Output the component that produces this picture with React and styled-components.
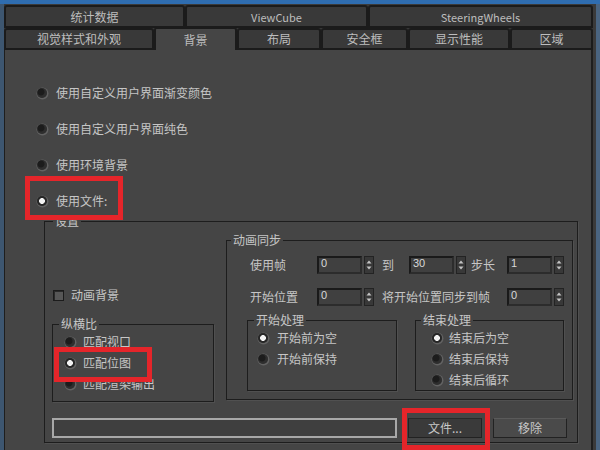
import styled, { createGlobalStyle } from "styled-components";

const Global = createGlobalStyle`
  html, body { margin: 0; padding: 0; background: #3a4a5a; }
  body { font-family: "Noto Sans CJK SC", "Noto Sans", sans-serif; }
`;

const Frame = styled.div`
  width: 600px;
  height: 450px;
  box-sizing: border-box;
  border-top: 4px solid #2f6db0;
  padding: 1px 7px 0 4px;
  background: linear-gradient(90deg, #3d5670 0 4px, #3a3a3a 4px calc(100% - 4px), #4a6480 calc(100% - 4px));
  display: flex;
  flex-direction: column;
  overflow: hidden;
`;

const TabRow = styled.div`
  display: flex;
  height: ${(p) => p.$h}px;
  align-items: flex-end;
`;

const Tab = styled.div`
  width: ${(p) => p.$w}px;
  height: ${(p) => (p.$active ? "calc(100% + 1px)" : "100%")};
  box-sizing: border-box;
  background: ${(p) => (p.$active ? "#454545" : "#393939")};
  border: 2px solid #1b1b1b;
  border-bottom: ${(p) => (p.$active ? "none" : "2px solid #1b1b1b")};
  border-radius: 3px 3px 0 0;
  color: #bdbdbd;
  font-size: ${(p) => (p.$latin ? 11 : 12)}px;
  line-height: 14px;
  display: flex;
  align-items: center;
  justify-content: center;
  position: relative;
  z-index: ${(p) => (p.$active ? 1 : 0)};
`;

const Panel = styled.div`
  flex: 1;
  background: #454545;
  border-left: 1px solid #1e1e1e;
  border-right: 2px solid #1e1e1e;
  color: #c6c6c6;
  font-size: 12px;
`;

const OptionList = styled.div`
  display: flex;
  flex-direction: column;
  gap: 16px;
  padding: 33px 0 0 32px;
`;

const OptionItem = styled.div`
  display: flex;
  align-items: center;
  gap: ${(p) => p.$gap ?? 9}px;
  height: ${(p) => p.$h ?? 20}px;
  line-height: 14px;
  white-space: nowrap;
  position: relative;
`;

const Radio = styled.span`
  flex: none;
  width: ${(p) => p.$size ?? 10}px;
  height: ${(p) => p.$size ?? 10}px;
  border-radius: 50%;
  background: ${(p) =>
    p.$on
      ? "radial-gradient(circle, #f2f2f2 0 2.6px, #262626 3.2px)"
      : "radial-gradient(circle at 40% 40%, #1c1c1c 0 3px, #2e2e2e 4px)"};
  box-shadow: 0.5px 0.5px 0 1px #626262;
`;

const Highlight = styled.span`
  position: absolute;
  left: ${(p) => p.$l}px;
  top: ${(p) => p.$t}px;
  width: ${(p) => p.$w}px;
  height: ${(p) => p.$h}px;
  box-sizing: border-box;
  border: 5px solid #e5252a;
  z-index: 5;
  pointer-events: none;
`;

const Group = styled.div`
  position: relative;
  box-sizing: border-box;
  width: ${(p) => p.$w}px;
  height: ${(p) => (p.$h ? `${p.$h}px` : "auto")};
  border: 1px solid #1d1d1d;
  box-shadow: 1px 1px 0 #505050;
`;

const Legend = styled.span`
  position: absolute;
  top: -8px;
  left: ${(p) => p.$x ?? 6}px;
  padding: 0 2px;
  background: #454545;
  line-height: 14px;
  font-size: 12px;
  color: #c6c6c6;
  z-index: 1;
`;

const SettingsGroup = styled(Group)`
  margin: 10px 0 0 39px;
  padding: 18px 4px 4px 7px;
`;

const Columns = styled.div`
  display: flex;
  gap: 12px;
`;

const LeftColumn = styled.div`
  width: 162px;
  display: flex;
  flex-direction: column;
`;

const CheckRow = styled.label`
  display: flex;
  align-items: center;
  gap: 7px;
  height: 14px;
  margin: 48px 0 22px 1px;
  line-height: 14px;
`;

const CheckBox = styled.span`
  width: 11px;
  height: 11px;
  box-sizing: border-box;
  background: #575757;
  border: 1px solid #1c1c1c;
  box-shadow: inset 1px 1px 0 #2a2a2a;
`;

const RadioStack = styled.div`
  display: flex;
  flex-direction: column;
  gap: 5px;
  padding: 9px 0 0 ${(p) => p.$pl}px;
`;

const AnimGroup = styled(Group)`
  padding: 15px 0 0 20px;
`;

const SpinRow = styled.div`
  display: flex;
  align-items: center;
  height: 18px;
  margin: 0 0 14px 3px;
  line-height: 14px;
  white-space: nowrap;
`;

const RowLabel = styled.span`
  width: ${(p) => p.$w}px;
  margin-left: ${(p) => p.$ml ?? 0}px;
  flex: none;
`;

const Spinner = styled.div`
  display: flex;
  gap: 2px;
  height: 18px;
  flex: none;
`;

const SpinInput = styled.div`
  width: 45px;
  box-sizing: border-box;
  background: #404040;
  border: 2px solid #1a1a1a;
  border-right-color: #2c2c2c;
  border-bottom-color: #2c2c2c;
  color: #d8d8d8;
  font-family: "Liberation Sans", "Noto Sans", sans-serif;
  font-size: 11px;
  line-height: 11px;
  padding: 0 0 0 2px;
`;

const SpinArrows = styled.div`
  width: 10px;
  box-sizing: border-box;
  background: #383838;
  border: 1px solid #232323;
  display: flex;
  align-items: center;
  justify-content: center;
`;

const SubGroups = styled.div`
  display: flex;
  gap: 18px;
  margin-top: 4px;
`;

const BottomRow = styled.div`
  display: flex;
  gap: 11px;
  height: 20px;
  margin-top: 16px;
`;

const PathField = styled.div`
  width: 345px;
  box-sizing: border-box;
  background: #3f3f3f;
  border: 2px solid #a8a8a8;
`;

const Button = styled.div`
  position: relative;
  width: 74px;
  box-sizing: border-box;
  background: ${(p) => (p.$light ? "#4a4a4a" : "#3a3a3a")};
  border: 1px solid #222;
  border-top-color: ${(p) => (p.$light ? "#5a5a5a" : "#2a2a2a")};
  color: #c8c8c8;
  font-size: 12px;
  line-height: 18px;
  text-align: center;
`;

const tabsTop = [
  { label: "统计数据", w: 181 },
  { label: "ViewCube", w: 183, latin: true },
  { label: "SteeringWheels", w: 225, latin: true },
];

const tabsBottom = [
  { label: "视觉样式和外观", w: 150 },
  { label: "背景", w: 83, active: true },
  { label: "布局", w: 84 },
  { label: "安全框", w: 87 },
  { label: "显示性能", w: 102 },
  { label: "区域", w: 83 },
];

const Arrows = () => (
  <svg width="6" height="12" viewBox="0 0 6 12">
    <path d="M3 1.5 L5.5 4.5 H0.5 Z" fill="#c4c4c4" />
    <path d="M3 10.5 L5.5 7.5 H0.5 Z" fill="#c4c4c4" />
  </svg>
);

const Spin = ({ value }) => (
  <Spinner>
    <SpinInput>{value}</SpinInput>
    <SpinArrows>
      <Arrows />
    </SpinArrows>
  </Spinner>
);

export default function App() {
  return (
    <>
      <Global />
      <Frame>
        <TabRow $h={23}>
          {tabsTop.map((t) => (
            <Tab key={t.label} $w={t.w} $latin={t.latin}>
              {t.label}
            </Tab>
          ))}
        </TabRow>
        <TabRow $h={22}>
          {tabsBottom.map((t) => (
            <Tab key={t.label} $w={t.w} $active={t.active}>
              {t.label}
            </Tab>
          ))}
        </TabRow>
        <Panel>
          <OptionList>
            <OptionItem>
              <Radio />
              使用自定义用户界面渐变颜色
            </OptionItem>
            <OptionItem>
              <Radio />
              使用自定义用户界面纯色
            </OptionItem>
            <OptionItem>
              <Radio />
              使用环境背景
            </OptionItem>
            <OptionItem>
              <Radio $on />
              使用文件:
              <Highlight $l={-12} $t={-15} $w={98} $h={44} />
            </OptionItem>
          </OptionList>

          <SettingsGroup $w={534}>
            <Legend $x={8}>设置</Legend>
            <Columns>
              <LeftColumn>
                <CheckRow>
                  <CheckBox />
                  动画背景
                </CheckRow>
                <Group $w={162} $h={78}>
                  <Legend>纵横比</Legend>
                  <RadioStack $pl={12}>
                    <OptionItem $h={16} $gap={8}>
                      <Radio />
                      匹配视口
                    </OptionItem>
                    <OptionItem $h={16} $gap={8}>
                      <Radio $on />
                      匹配位图
                      <Highlight $l={-11} $t={-8} $w={98} $h={35} />
                    </OptionItem>
                    <OptionItem $h={16} $gap={8}>
                      <Radio />
                      匹配渲染输出
                    </OptionItem>
                  </RadioStack>
                </Group>
              </LeftColumn>

              <AnimGroup $w={347} $h={160}>
                <Legend $x={4}>动画同步</Legend>
                <SpinRow>
                  <RowLabel $w={67}>使用帧</RowLabel>
                  <Spin value="0" />
                  <RowLabel $w={27} $ml={8}>到</RowLabel>
                  <Spin value="30" />
                  <RowLabel $w={36} $ml={5}>步长</RowLabel>
                  <Spin value="1" />
                </SpinRow>
                <SpinRow>
                  <RowLabel $w={67}>开始位置</RowLabel>
                  <Spin value="0" />
                  <RowLabel $w={125} $ml={8}>将开始位置同步到帧</RowLabel>
                  <Spin value="0" />
                </SpinRow>
                <SubGroups>
                  <Group $w={150} $h={71}>
                    <Legend>开始处理</Legend>
                    <RadioStack $pl={10}>
                      <OptionItem $h={16} $gap={9}>
                        <Radio $on />
                        开始前为空
                      </OptionItem>
                      <OptionItem $h={16} $gap={9}>
                        <Radio />
                        开始前保持
                      </OptionItem>
                    </RadioStack>
                  </Group>
                  <Group $w={149} $h={71}>
                    <Legend $x={5}>结束处理</Legend>
                    <RadioStack $pl={16}>
                      <OptionItem $h={16} $gap={7}>
                        <Radio $on />
                        结束后为空
                      </OptionItem>
                      <OptionItem $h={16} $gap={7}>
                        <Radio />
                        结束后保持
                      </OptionItem>
                      <OptionItem $h={16} $gap={7}>
                        <Radio />
                        结束后循环
                      </OptionItem>
                    </RadioStack>
                  </Group>
                </SubGroups>
              </AnimGroup>
            </Columns>

            <BottomRow>
              <PathField />
              <Button>
                文件...
                <Highlight $l={-7} $t={-11} $w={88} $h={42} />
              </Button>
              <Button $light>移除</Button>
            </BottomRow>
          </SettingsGroup>
        </Panel>
      </Frame>
    </>
  );
}
